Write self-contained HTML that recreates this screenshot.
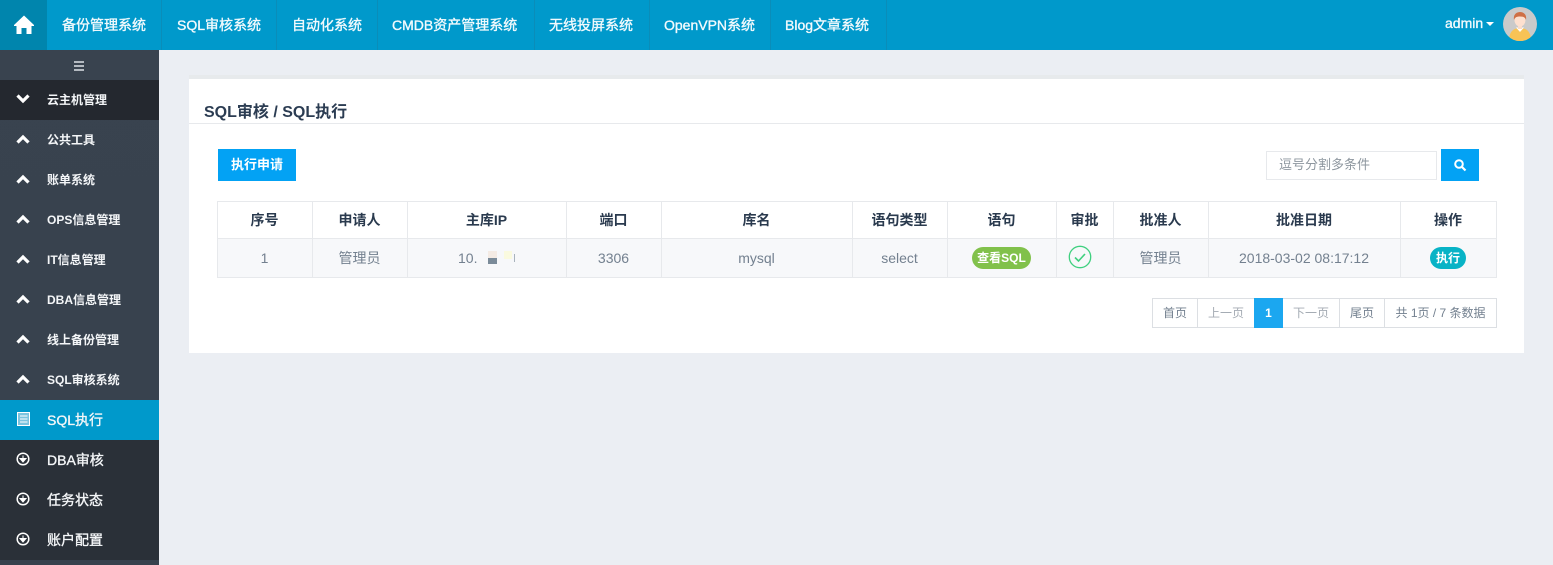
<!DOCTYPE html>
<html><head><meta charset="utf-8"><style>
*{box-sizing:border-box}
html,body{margin:0;padding:0}
body{width:1553px;height:565px;overflow:hidden;position:relative;background:#ebeef3;font-family:"Liberation Sans","Noto Sans CJK SC",sans-serif;color:#73808f;font-size:14px}
.a{position:absolute;white-space:nowrap}
#top{left:0;top:0;width:1553px;height:50px;background:#0099cb}
#home{left:0;top:0;width:47px;height:50px;background:#0085ad}
.sep{top:0;width:1px;height:50px;background:#0a8db9}
.nav{top:0;height:50px;line-height:50px;color:#f2fafd;font-size:14px;-webkit-text-stroke:.35px #f2fafd}
#side{left:0;top:50px;width:159px;height:515px;background:linear-gradient(#39434f,#37414d)}
.it{left:0;width:159px;height:40px}
.it span{position:absolute;left:47px;top:0;line-height:41px;color:#f4f6f8;font-size:12px;font-weight:bold}
.it.big span{font-size:14px;line-height:41px;font-weight:normal;-webkit-text-stroke:.35px #f4f6f8}
.it svg{position:absolute;left:15px;top:11px}
#panel{left:189px;top:75px;width:1335px;height:278px;background:#fff;border-top:4px solid #e7eaec}
.th,.td{text-align:center;top:0}
.vl{width:1px;background:#e7e9ec}
.hl{height:1px;background:#e7e9ec}
.th{top:202px;height:36px;line-height:36px;color:#2a3a4e;font-weight:bold;font-size:14px}
.td{top:239px;height:38px;line-height:38px;color:#73808f;font-size:14px}
.pg{top:299px;height:28px;line-height:28px;text-align:center;font-size:12px;color:#73808f}
.pv{top:298px;width:1px;height:30px;background:#dcdfe3}
</style></head><body>
<div class="a" id="top"></div>
<div class="a" id="home"></div>
<svg class="a" style="left:13px;top:14px" width="22" height="20" viewBox="0 0 22 20"><path d="M11 1.5 L21 11 V12 H18.5 V20 H13.5 V14 H8.5 V20 H3.5 V12 H1 V11 Z" fill="#fff"/></svg>
<div class="a sep" style="left:161px"></div><div class="a sep" style="left:276px"></div><div class="a sep" style="left:377px"></div><div class="a sep" style="left:534px"></div><div class="a sep" style="left:649px"></div><div class="a sep" style="left:770px"></div><div class="a sep" style="left:886px"></div>
<div class="a nav" style="left:62px">备份管理系统</div>
<div class="a nav" style="left:177px">SQL审核系统</div>
<div class="a nav" style="left:292px">自动化系统</div>
<div class="a nav" style="left:392px">CMDB资产管理系统</div>
<div class="a nav" style="left:549px">无线投屏系统</div>
<div class="a nav" style="left:664px">OpenVPN系统</div>
<div class="a nav" style="left:785px">Blog文章系统</div>
<div class="a nav" style="left:1445px;top:-2px;font-size:14px">admin</div>
<div class="a" style="left:1486px;top:22px;width:0;height:0;border-left:4px solid transparent;border-right:4px solid transparent;border-top:4px solid #fff"></div>
<svg class="a" style="left:1503px;top:7px" width="34" height="34" viewBox="0 0 34 34"><defs><clipPath id="c"><circle cx="17" cy="17" r="17"/></clipPath></defs><circle cx="17" cy="17" r="17" fill="#cacaca"/><g clip-path="url(#c)"><path d="M6 34 C6 24 11 21 17 21 C23 21 28 24 28 34 Z" fill="#f8c355"/><path d="M13 20.5 L17 25 L21 20.5 Z" fill="#fff"/><rect x="15" y="16" width="4" height="6" fill="#fbdcc8"/><ellipse cx="17" cy="13" rx="5.5" ry="6.5" fill="#fde0cf"/><path d="M11 13 C10 7 14 5 17 5 C20 5 24 7 23 13 C22 10 20 9.5 17 9.5 C14 9.5 12 10 11 13Z" fill="#cf6f45"/></g></svg>

<div class="a" id="side"></div>
<div class="a" style="left:74px;top:61px;width:10px;height:2px;background:#b4bac1"></div>
<div class="a" style="left:74px;top:65px;width:10px;height:2px;background:#b4bac1"></div>
<div class="a" style="left:74px;top:69px;width:10px;height:2px;background:#b4bac1"></div>

<div class="a it" style="top:80px;background:#24282f"><svg width="16" height="16" viewBox="0 0 16 16"><path d="M2.5 4.5 L8 10 L13.5 4.5" fill="none" stroke="#fff" stroke-width="3.2"/></svg><span>云主机管理</span></div>
<div class="a it" style="top:120px"><svg width="16" height="16" viewBox="0 0 16 16"><path d="M2.5 11.5 L8 6 L13.5 11.5" fill="none" stroke="#fff" stroke-width="3.2"/></svg><span>公共工具</span></div>
<div class="a it" style="top:160px"><svg width="16" height="16" viewBox="0 0 16 16"><path d="M2.5 11.5 L8 6 L13.5 11.5" fill="none" stroke="#fff" stroke-width="3.2"/></svg><span>账单系统</span></div>
<div class="a it" style="top:200px"><svg width="16" height="16" viewBox="0 0 16 16"><path d="M2.5 11.5 L8 6 L13.5 11.5" fill="none" stroke="#fff" stroke-width="3.2"/></svg><span>OPS信息管理</span></div>
<div class="a it" style="top:240px"><svg width="16" height="16" viewBox="0 0 16 16"><path d="M2.5 11.5 L8 6 L13.5 11.5" fill="none" stroke="#fff" stroke-width="3.2"/></svg><span>IT信息管理</span></div>
<div class="a it" style="top:280px"><svg width="16" height="16" viewBox="0 0 16 16"><path d="M2.5 11.5 L8 6 L13.5 11.5" fill="none" stroke="#fff" stroke-width="3.2"/></svg><span>DBA信息管理</span></div>
<div class="a it" style="top:320px"><svg width="16" height="16" viewBox="0 0 16 16"><path d="M2.5 11.5 L8 6 L13.5 11.5" fill="none" stroke="#fff" stroke-width="3.2"/></svg><span>线上备份管理</span></div>
<div class="a it" style="top:360px"><svg width="16" height="16" viewBox="0 0 16 16"><path d="M2.5 11.5 L8 6 L13.5 11.5" fill="none" stroke="#fff" stroke-width="3.2"/></svg><span>SQL审核系统</span></div>
<div class="a it big" style="top:400px;background:#0099cb"><svg width="16" height="16" viewBox="0 0 16 16" style="left:16px;top:12px"><rect x="1.5" y="0.5" width="12" height="13" fill="#7cc4df" stroke="#fff"/><path d="M4 4H11.5M4 7H11.5M4 10H11.5" stroke="#fff" stroke-width="1"/></svg><span>SQL执行</span></div>
<div class="a" style="left:0;top:440px;width:159px;height:120px;background:#2a3038"></div>
<div class="a it big" style="top:440px"><svg width="16" height="16" viewBox="0 0 16 16"><circle cx="8" cy="8" r="5.8" fill="none" stroke="#fff" stroke-width="1.5"/><path d="M8 4.5V8M5 7.5L8 11L11 7.5Z" fill="#fff" stroke="#fff"/></svg><span>DBA审核</span></div>
<div class="a it big" style="top:480px"><svg width="16" height="16" viewBox="0 0 16 16"><circle cx="8" cy="8" r="5.8" fill="none" stroke="#fff" stroke-width="1.5"/><path d="M8 4.5V8M5 7.5L8 11L11 7.5Z" fill="#fff" stroke="#fff"/></svg><span>任务状态</span></div>
<div class="a it big" style="top:520px"><svg width="16" height="16" viewBox="0 0 16 16"><circle cx="8" cy="8" r="5.8" fill="none" stroke="#fff" stroke-width="1.5"/><path d="M8 4.5V8M5 7.5L8 11L11 7.5Z" fill="#fff" stroke="#fff"/></svg><span>账户配置</span></div>

<div class="a" id="panel"></div>
<div class="a" style="left:204px;top:104px;line-height:18px;font-size:16px;font-weight:bold;color:#2b3c52">SQL审核 / SQL执行</div>
<div class="a hl" style="left:189px;top:123px;width:1335px"></div>
<div class="a" style="left:218px;top:149px;width:78px;height:32px;background:#03a2f4;color:#fff;text-align:center;line-height:31px;font-size:13px;font-weight:bold">执行申请</div>
<div class="a" style="left:1266px;top:151px;width:171px;height:29px;border:1px solid #e7e9ec;background:#fff;color:#8e979f;font-size:13px;line-height:26px;padding-left:12px">逗号分割多条件</div>
<div class="a" style="left:1441px;top:149px;width:38px;height:32px;background:#03a2f4"></div>
<svg class="a" style="left:1453px;top:158px" width="14" height="14" viewBox="0 0 14 14"><circle cx="6" cy="6" r="3.8" fill="none" stroke="#fff" stroke-width="2"/><path d="M9 9L12.5 12.5" stroke="#fff" stroke-width="2.2"/></svg>

<div class="a" style="left:218px;top:239px;width:1278px;height:38px;background:#f7f8fa"></div>
<div class="a hl" style="left:217px;top:201px;width:1280px"></div>
<div class="a hl" style="left:217px;top:238px;width:1280px"></div>
<div class="a hl" style="left:217px;top:277px;width:1280px"></div>
<div class="a vl" style="left:217px;top:201px;height:77px"></div>
<div class="a vl" style="left:312px;top:201px;height:77px"></div>
<div class="a vl" style="left:407px;top:201px;height:77px"></div>
<div class="a vl" style="left:566px;top:201px;height:77px"></div>
<div class="a vl" style="left:661px;top:201px;height:77px"></div>
<div class="a vl" style="left:852px;top:201px;height:77px"></div>
<div class="a vl" style="left:947px;top:201px;height:77px"></div>
<div class="a vl" style="left:1056px;top:201px;height:77px"></div>
<div class="a vl" style="left:1113px;top:201px;height:77px"></div>
<div class="a vl" style="left:1208px;top:201px;height:77px"></div>
<div class="a vl" style="left:1400px;top:201px;height:77px"></div>
<div class="a vl" style="left:1496px;top:201px;height:77px"></div>

<div class="a th" style="left:217px;width:95px">序号</div>
<div class="a th" style="left:312px;width:95px">申请人</div>
<div class="a th" style="left:407px;width:159px">主库IP</div>
<div class="a th" style="left:566px;width:95px">端口</div>
<div class="a th" style="left:661px;width:191px">库名</div>
<div class="a th" style="left:852px;width:95px">语句类型</div>
<div class="a th" style="left:947px;width:109px">语句</div>
<div class="a th" style="left:1056px;width:57px">审批</div>
<div class="a th" style="left:1113px;width:95px">批准人</div>
<div class="a th" style="left:1208px;width:192px">批准日期</div>
<div class="a th" style="left:1400px;width:96px">操作</div>

<div class="a td" style="left:217px;width:95px">1</div>
<div class="a td" style="left:312px;width:95px">管理员</div>
<div class="a td" style="left:458px">10.</div>
<div class="a" style="left:488px;top:251px;width:9px;height:7px;background:#f4ebe4"></div>
<div class="a" style="left:488px;top:258px;width:9px;height:6px;background:#7b8b99"></div>
<div class="a" style="left:504px;top:251px;width:8px;height:8px;background:#fafadf"></div>
<div class="a" style="left:512px;top:254px;width:3px;height:8px;border-right:1px solid #a9b3bc"></div>
<div class="a td" style="left:566px;width:95px">3306</div>
<div class="a td" style="left:661px;width:191px">mysql</div>
<div class="a td" style="left:852px;width:95px">select</div>
<div class="a" style="left:972px;top:247px;width:59px;height:22px;border-radius:11px;background:#81c14b;color:#fff;text-align:center;line-height:22px;font-size:12px;font-weight:bold">查看SQL</div>
<svg class="a" style="left:1068px;top:245px" width="24" height="24" viewBox="0 0 24 24"><circle cx="12" cy="12" r="10.7" fill="none" stroke="#3fd07f" stroke-width="1.3"/><path d="M7 12.5L10.5 16L17 9" fill="none" stroke="#3fd07f" stroke-width="1.6"/></svg>
<div class="a td" style="left:1113px;width:95px">管理员</div>
<div class="a td" style="left:1208px;width:192px">2018-03-02 08:17:12</div>
<div class="a" style="left:1430px;top:247px;width:36px;height:22px;border-radius:11px;background:#08b3c6;color:#fff;text-align:center;line-height:22px;font-size:12px;font-weight:bold">执行</div>

<div class="a" style="left:1152px;top:298px;width:345px;height:30px;border:1px solid #dcdfe3"></div>
<div class="a pv" style="left:1197px"></div>
<div class="a pv" style="left:1339px"></div>
<div class="a pv" style="left:1384px"></div>
<div class="a" style="left:1254px;top:298px;width:29px;height:30px;background:#1ba7f0;color:#fff;text-align:center;line-height:30px;font-size:12px;font-weight:bold">1</div>
<div class="a pg" style="left:1153px;width:44px">首页</div>
<div class="a pg" style="left:1198px;width:56px;color:#a4abb3">上一页</div>
<div class="a pg" style="left:1283px;width:56px;color:#a4abb3">下一页</div>
<div class="a pg" style="left:1340px;width:44px">尾页</div>
<div class="a pg" style="left:1385px;width:111px">共 1页 / 7 条数据</div>
</body></html>
